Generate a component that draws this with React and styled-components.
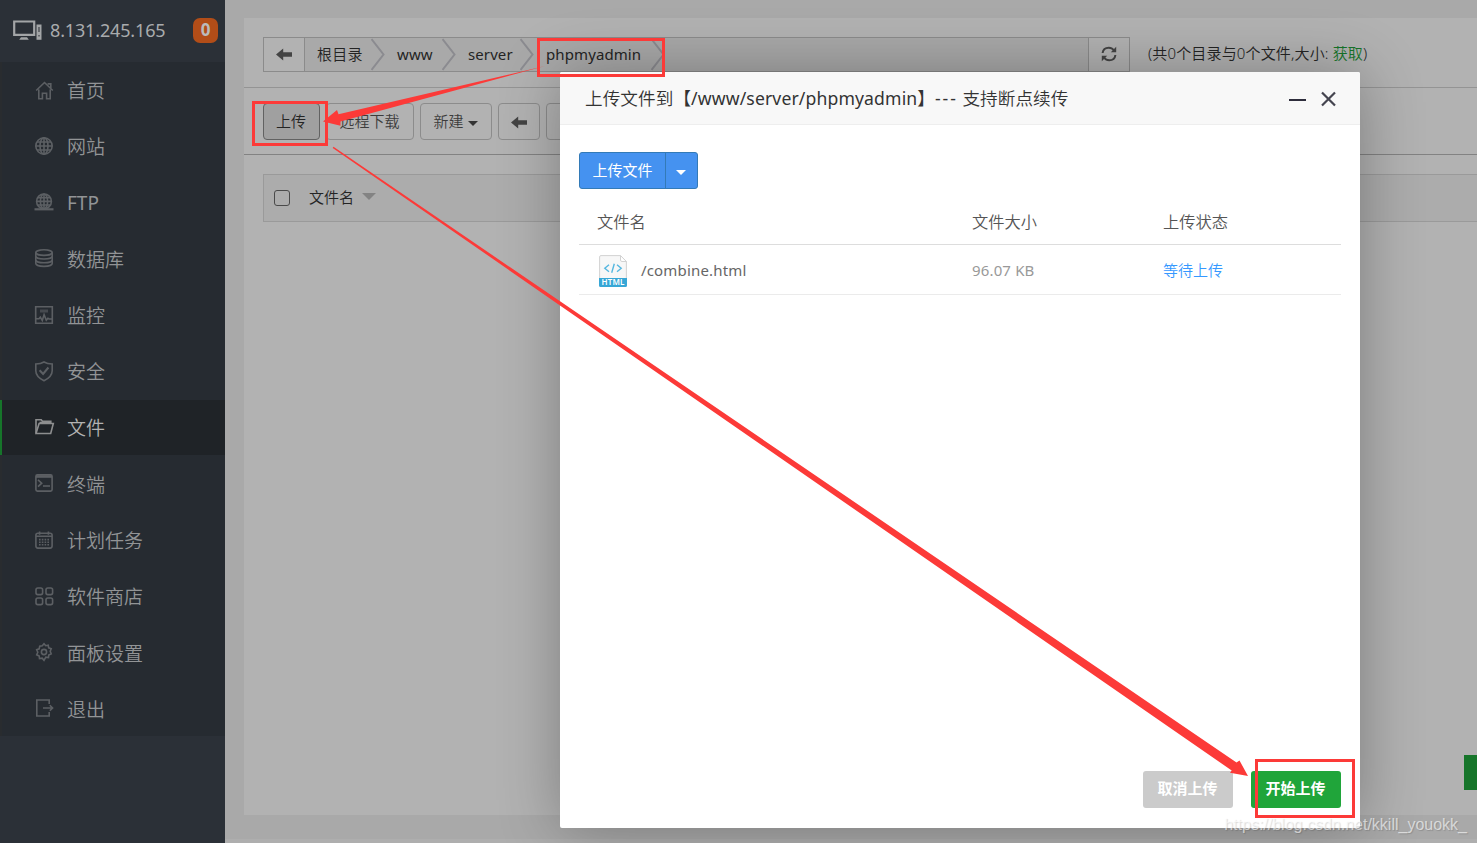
import React from "react";
import styled, { createGlobalStyle, css } from "styled-components";

const iconPaths = {
  home: (
    <>
      <path d="M1.2 9.5 9.5 1.5l8.3 8M3.8 8.5v9.2h3.6v-5.4h4.2v5.4h3.6V8.5" />
      <path d="M12.6 2.900h3.2v4" />
    </>
  ),
  site: (
    <>
      <circle cx="9" cy="9" r="8.2" />
      <ellipse cx="9" cy="9" rx="4" ry="8.2" />
      <path d="M9 .8v16.4M.8 9h16.4M2 5h14M2 13h14" />
    </>
  ),
  ftp: (
    <>
      <circle cx="9" cy="8.4" r="7.4" />
      <ellipse cx="9" cy="8.4" rx="3.6" ry="7.4" />
      <path d="M9 1v14M1.6 8.4h14.8M2.8 4.8h12.4M2.8 12h12.4" />
      <path d="M-.5 16.3h19" strokeWidth="2.2" />
    </>
  ),
  database: (
    <>
      <ellipse cx="9" cy="3.6" rx="8.2" ry="2.8" />
      <path d="M.8 3.6v11c0 1.6 3.6 2.8 8.2 2.8s8.2-1.2 8.2-2.8v-11" />
      <path d="M.8 7.2c0 1.6 3.6 2.8 8.2 2.8s8.2-1.2 8.2-2.8M.8 10.9c0 1.6 3.6 2.8 8.2 2.8s8.2-1.2 8.2-2.8" />
    </>
  ),
  monitor: (
    <>
      <path d="M.7.7h16.6v16.6H.7z" />
      <path d="M5 3.5h8v3H5z" fill="currentColor" stroke="none" opacity=".6" />
      <path d="M1 12.7h3l1.3-1.5 2 3.4 1.8-6 2.2 5.6 1.6-2 1.2.8h3" />
    </>
  ),
  shield: (
    <>
      <path d="M9 0c2.3 1.4 5 2 8.2 2v6.7c0 5.2-3.8 7.8-8.2 10C4.6 16.5.8 13.9.8 8.7V2C4 2 6.700 1.400 9 0z" />
      <path d="m4.600 8.300 3.500 3.700L13.400 5.500" strokeWidth="2" />
    </>
  ),
  folder: (
    <>
      <path d="M1 15V1.700h5.200l1.200 1.600h8.400V6" />
      <path d="M1 15.500 4.100 5.500h14.200l-2.600 10H1z" />
      <path d="M4.500 4.700h11" strokeWidth="2" />
    </>
  ),
  terminal: (
    <>
      <rect x=".9" y=".9" width="16.200" height="16.200" rx="1.500" />
      <path d="M1 2.500h16" strokeWidth="2.600" />
      <path d="m3 5.800 3.700 3.400L3 12.600M8 12h7" />
    </>
  ),
  calendar: (
    <>
      <rect x=".9" y="2.300" width="16.200" height="14.800" rx="2" />
      <path d="M1 5.300h16M4.600.5v3.300M13.400.5v3.300" />
      <path d="M4 8.600h10M4 11.200h10M4 13.800h10" strokeDasharray="1.600 1.200" />
    </>
  ),
  apps: (
    <>
      <rect x="1" y="1" width="6.600" height="6.600" rx="1.800" />
      <rect x="11" y="1" width="6.600" height="6.600" rx="1.800" />
      <rect x="1" y="11" width="6.600" height="6.600" rx="1.800" />
      <rect x="11" y="11" width="6.600" height="6.600" rx="1.800" />
    </>
  ),
  gear: (
    <>
      <path d="M7.300 2.700 9 .7l1.700 2 2.500-.6.5 2.700 2.500 1-1 2.400 1 2.600-2.400 1.200-.3 2.600-2.700-.4L9 17.300l-1.800-2.100-2.700.4-.3-2.600-2.500-1.200 1.100-2.600-1.100-2.400 2.500-1 .5-2.700z" />
      <circle cx="9" cy="9" r="2.600" />
    </>
  ),
  exit: (
    <>
      <path d="M14.200 5V1H1.800v16h12.400v-4" />
      <path d="M8 9h9.500M14.800 6.200 17.600 9l-2.800 2.800" />
    </>
  ),
};

const menu = [
  { icon: "home", label: "首页" },
  { icon: "site", label: "网站" },
  { icon: "ftp", label: "FTP", latin: true },
  { icon: "database", label: "数据库" },
  { icon: "monitor", label: "监控" },
  { icon: "shield", label: "安全" },
  { icon: "folder", label: "文件", active: true },
  { icon: "terminal", label: "终端" },
  { icon: "calendar", label: "计划任务" },
  { icon: "apps", label: "软件商店" },
  { icon: "gear", label: "面板设置" },
  { icon: "exit", label: "退出" },
];

const crumbs = [
  { label: "根目录", width: 80 },
  { label: "www", width: 71, latin: true },
  { label: "server", width: 78, latin: true },
  { label: "phpmyadmin", width: 131, latin: true },
];

const ArrowLeft = () => (
  <svg width="16" height="13" viewBox="0 0 16 13">
    <path d="M0 6.500 7.200.4v3.900H16v4.400H7.200v3.900z" fill="#444" />
  </svg>
);

function Sidebar() {
  return (
    <Side>
      <Server>
        <svg width="29" height="21" viewBox="0 0 29 21">
          <path d="M1.200 1.500h20v13.300h-20z" fill="none" stroke="#a3a5a7" strokeWidth="2.200" />
          <path d="M8 17.200h6l1.800 2.600H6.200z" fill="#a3a5a7" />
          <path d="M23.500 4.500h5v15.300h-5z" fill="#a3a5a7" />
          <path d="M25.200 7h1.600v5h-1.600zM25.200 15h1.600v1.600h-1.600z" fill="#55595e" />
        </svg>
        <Ip>8.131.245.165</Ip>
        <Count>0</Count>
      </Server>
      <Menu>
        {menu.map((item) => (
          <MenuItem key={item.label} $active={item.active} $latin={item.latin}>
            <svg width="19" height="20" viewBox="0 0 19 20">
              {iconPaths[item.icon]}
            </svg>
            {item.label}
          </MenuItem>
        ))}
      </Menu>
    </Side>
  );
}

function FilePanel() {
  return (
    <Main>
      <Panel>
        <PathRow>
          <BackButton>
            <ArrowLeft />
          </BackButton>
          <Crumbs>
            {crumbs.map((crumb) => (
              <Crumb key={crumb.label} $width={crumb.width} $latin={crumb.latin}>
                <span>{crumb.label}</span>
                <svg width="14" height="33" viewBox="0 0 14 33">
                  <path d="M.5 1 12.500 16.500.5 32" fill="none" stroke="#8b8b90" strokeWidth="2" />
                </svg>
              </Crumb>
            ))}
          </Crumbs>
          <RefreshButton>
            <svg width="16" height="16" viewBox="0 0 16 16" fill="none" stroke="#444" strokeWidth="2">
              <path d="M1.600 7C2 3.800 4.600 1.700 7.800 1.700c2.200 0 3.900 1 5 2.600M14.400 9c-.4 3.200-3 5.300-6.200 5.300-2.200 0-3.900-1-5-2.600" />
              <path d="M15.200.8v5.400H9.800zM.8 15.200V9.800h5.400z" fill="#444" stroke="none" />
            </svg>
          </RefreshButton>
          <Summary>
            (共0个目录与0个文件,大小: <a>获取</a>)
          </Summary>
        </PathRow>
        <ToolRow>
          <ToolButton $width={57} $pressed>
            上传
          </ToolButton>
          <ToolButton $width={88}>远程下载</ToolButton>
          <ToolButton $width={72}>
            新建
            <Caret />
          </ToolButton>
          <ToolButton $width={42}>
            <ArrowLeft />
          </ToolButton>
          <ToolButton $width={64} />
        </ToolRow>
        <ListHead>
          <Checkbox />
          <span>文件名</span>
          <SortMark />
        </ListHead>
      </Panel>
      <Footer />
      <SideTab />
    </Main>
  );
}

function UploadDialog() {
  return (
    <Dialog>
      <DialogHead>
        <DialogTitle>
          上传文件到【<Path>/www/server/phpmyadmin</Path>】<Dashes>---</Dashes> 支持断点续传
        </DialogTitle>
        <svg width="48" height="18" viewBox="0 0 48 18" fill="none" stroke="#2e2d3c">
          <path d="M0 10h17" strokeWidth="2" />
          <path d="m33 2.500 13 13m0-13-13 13" strokeWidth="2.200" stroke="#44444f" />
        </svg>
      </DialogHead>
      <DialogBody>
        <SplitButton>
          <SplitLabel>上传文件</SplitLabel>
          <SplitToggle>
            <Caret $light />
          </SplitToggle>
        </SplitButton>
        <HeadRow>
          <span>文件名</span>
          <span>文件大小</span>
          <span>上传状态</span>
        </HeadRow>
        <FileRow>
          <FileName>
            <svg width="28" height="32" viewBox="0 0 28 32">
              <path d="M2 .6h19.500l5.900 5.900V30a1.400 1.400 0 0 1-1.400 1.400H2A1.400 1.400 0 0 1 .6 30V2A1.400 1.400 0 0 1 2 .6z" fill="#f7f7f7" stroke="#d2d2d2" />
              <path d="M21.500.6v4.500c0 .8.600 1.400 1.400 1.400h4.500z" fill="#fff" stroke="#d2d2d2" />
              <path d="M0 23h28v7.500a1.500 1.500 0 0 1-1.500 1.500h-25A1.500 1.500 0 0 1 0 30.500z" fill="#37a7d6" />
              <path d="m10 9.800-4.200 3.500 4.200 3.500M18 9.800l4.200 3.500-4.200 3.500M15.300 8.800l-2.600 9" fill="none" stroke="#55b7e0" strokeWidth="1.400" />
              <text x="14" y="30.400" textAnchor="middle" fontSize="8" fontWeight="600" textLength="23" fill="#fff">
                HTML
              </text>
            </svg>
            <span>/combine.html</span>
          </FileName>
          <Size>96.07 KB</Size>
          <Status>等待上传</Status>
        </FileRow>
      </DialogBody>
      <DialogFoot>
        <FootButton>取消上传</FootButton>
        <FootButton $primary>开始上传</FootButton>
      </DialogFoot>
    </Dialog>
  );
}

function Marks() {
  return (
    <MarkLayer width="1477" height="843" viewBox="0 0 1477 843">
      <g fill="none" stroke="#fc3a38" strokeWidth="3">
        <path d="M538.500 39.500h125v36h-125z" />
        <path d="M253.500 102.500h73v42h-73z" />
        <path d="M1256.500 760.500h97v56h-97z" />
      </g>
      <g fill="#fc3a38">
        <path d="M545 66 340.500 121.500v4.300l-17.500-4.300 14-11.500 1.500 4.300z" />
        <path d="M333.500 146.800 1236.500 762.500l3-2L1248 776l-18-3.300 1.700-2.200L332.700 148z" />
      </g>
    </MarkLayer>
  );
}

export default function App() {
  return (
    <>
      <GlobalStyle />
      <Screen>
        <Sidebar />
        <FilePanel />
        <UploadDialog />
        <Marks />
        <Watermark>https://blog.csdn.net/kkill_youokk_</Watermark>
      </Screen>
    </>
  );
}

const GlobalStyle = createGlobalStyle`
  * {
    box-sizing: border-box;
  }

  body {
    margin: 0;
    overflow: hidden;
    font-family: "Noto Sans", "Noto Sans CJK SC", sans-serif;
    font-size: 15px;
    font-weight: 350;
    color: #242424;
  }
`;

const Screen = styled.div`
  position: relative;
  display: flex;
  width: 1477px;
  height: 843px;
  overflow: hidden;
  background: #a9a9a9;
`;

const Side = styled.aside`
  width: 225px;
  background: #2b3037;
`;

const Server = styled.div`
  display: flex;
  align-items: center;
  height: 62px;
  padding: 0 7px 2px 13px;
`;

const Ip = styled.span`
  flex: 1;
  margin-left: 8px;
  font-size: 18px;
  font-weight: 400;
  letter-spacing: -0.15px;
  color: #a9abad;
`;

const Count = styled.span`
  width: 25px;
  height: 25px;
  border-radius: 7px;
  background: #b24d18;
  color: #bbb;
  font-size: 17px;
  font-weight: 700;
  line-height: 24px;
  text-align: center;
`;

const Menu = styled.nav`
  display: grid;
  grid-template-rows: repeat(12, 56.25px);
  height: 674px;
  overflow: hidden;
  background: #262b31;
`;

const MenuItem = styled.a`
  display: flex;
  align-items: center;
  padding-left: 33px;
  border-left: 2px solid #292c2f;
  color: #929496;
  font-size: 19px;
  font-weight: ${({ $latin }) => ($latin ? 400 : 350)};

  svg {
    width: 19px;
    margin: 1px 13px 0 0;
    overflow: visible;
    fill: none;
    stroke: currentColor;
    stroke-width: 1.6;
    opacity: 0.5;
  }

  ${({ $active }) =>
    $active &&
    css`
      height: 55px;
      margin-top: 0.5px;
      padding-bottom: 1px;
      border-color: #16752a;
      background: #1f2327;
      color: #b2b2b2;

      svg {
        opacity: 0.75;
      }
    `}
`;

const Main = styled.main`
  position: relative;
  flex: 1;
  display: flex;
  flex-direction: column;
  justify-content: space-between;
  padding: 18px 0 0 19px;
`;

const Panel = styled.section`
  height: 797px;
  background: #b2b2b2;
`;

const PathRow = styled.div`
  display: flex;
  height: 70px;
  padding: 19px 0 0 19px;
  border-bottom: 1px solid #949494;
`;

const SquareButton = styled.button`
  display: flex;
  align-items: center;
  justify-content: center;
  width: 42px;
  height: 35px;
  padding: 0 0 1px;
  border: 1px solid #8b8b8b;
  background: #b2b2b2;
`;

const BackButton = styled(SquareButton)``;

const RefreshButton = styled(SquareButton)`
  margin-left: -1px;
  padding-bottom: 2px;
`;

const Crumbs = styled.div`
  display: flex;
  width: 785px;
  height: 35px;
  margin-left: -1px;
  border: 1px solid #8b8b8b;
  background: #a9a9a9;
`;

const Crumb = styled.span`
  display: flex;
  align-items: center;
  justify-content: space-between;
  width: ${({ $width }) => $width}px;
  padding-left: 12px;
  font-weight: ${({ $latin }) => ($latin ? 400 : 350)};
  letter-spacing: ${({ $latin }) => ($latin ? 0.1 : 0.2)}px;

  span {
    padding-bottom: 2px;
  }
`;

const Summary = styled.div`
  margin-left: 18px;
  line-height: 32px;
  letter-spacing: 0.15px;

  a {
    color: #16752a;
  }
`;

const ToolRow = styled.div`
  display: flex;
  gap: 6px;
  height: 67px;
  padding: 15px 0 0 19px;
  border-bottom: 1px solid #828282;
`;

const ToolButton = styled.button`
  display: flex;
  align-items: center;
  justify-content: center;
  width: ${({ $width }) => $width}px;
  height: 37px;
  padding: 0 1px 2px 0;
  border: 1px solid ${({ $pressed }) => ($pressed ? "#626262" : "#8c8c8c")};
  border-radius: 4px;
  background: ${({ $pressed }) => ($pressed ? "#a0a0a0" : "#b2b2b2")};
  color: ${({ $pressed }) => ($pressed ? "#242424" : "#3c3c3c")};
  font: inherit;

  svg {
    margin: 3px 0 0 1px;
  }
`;

const Caret = styled.i`
  margin: ${({ $light }) => ($light ? "0 2px 0 0" : "5px 0 0 4px")};
  border: 5px solid transparent;
  border-top-color: ${({ $light }) => ($light ? "#fff" : "#333")};
  border-bottom: 0;
`;

const ListHead = styled.div`
  display: flex;
  align-items: center;
  height: 48px;
  margin: 19px 0 0 19px;
  padding-left: 10px;
  border: 1px solid #9a9a9a;
  border-right: 0;
  background: #acacac;

  span {
    padding-bottom: 3px;
  }
`;

const Checkbox = styled.i`
  width: 16px;
  height: 16px;
  margin-right: 19px;
  border: 1px solid #4a4a4a;
  border-radius: 3px;
`;

const SortMark = styled.i`
  margin: 0 0 3px 8px;
  border: 7px solid transparent;
  border-top-color: #838383;
  border-bottom: 0;
`;

const Footer = styled.footer`
  height: 4px;
  margin-left: -19px;
  background: #aeaeae;
`;

const SideTab = styled.div`
  position: absolute;
  right: 0;
  top: 755px;
  width: 13px;
  height: 35px;
  background: #16752a;
`;

const Dialog = styled.div`
  position: absolute;
  left: 560px;
  top: 72px;
  display: flex;
  flex-direction: column;
  width: 800px;
  height: 756px;
  border-radius: 2px;
  background: #fff;
  box-shadow: 1px 1px 62px rgba(0, 0, 0, 0.3);
`;

const DialogHead = styled.header`
  display: flex;
  align-items: center;
  justify-content: space-between;
  height: 53px;
  padding: 2px 23px 0 25px;
  border-bottom: 1px solid #eee;
  border-radius: 2px 2px 0 0;
  background: #f8f8f8;
`;

const DialogTitle = styled.h3`
  margin: 0;
  padding-bottom: 4px;
  font-size: 17.6px;
  font-weight: 350;
  letter-spacing: 0.09px;
  color: #333;
  white-space: nowrap;
`;

const Path = styled.span`
  font-weight: 400;
  letter-spacing: 0.13px;
`;

const Dashes = styled.span`
  font-weight: 400;
  letter-spacing: 1.9px;
`;

const DialogBody = styled.div`
  flex: 1;
  padding: 27px 19px 0;
`;

const SplitButton = styled.div`
  display: flex;
  width: 119px;
  height: 37px;
  border: 1px solid #337ab7;
  border-radius: 3px;
  background: #4592f0;
  color: #fff;
  font-weight: 400;
`;

const SplitLabel = styled.span`
  width: 86px;
  border-right: 1px solid #337ab7;
  line-height: 34px;
  text-align: center;
`;

const SplitToggle = styled.span`
  flex: 1;
  display: flex;
  align-items: center;
  justify-content: center;
  padding-top: 3px;
`;

const Row = styled.div`
  display: grid;
  grid-template-columns: 375px 191px 1fr;
  align-items: center;
  padding-left: 18px;
`;

const HeadRow = styled(Row)`
  height: 56px;
  padding-top: 8px;
  border-bottom: 1px solid #ddd;
  color: #555;
  font-size: 16.25px;
`;

const FileRow = styled(Row)`
  height: 50px;
  border-bottom: 1px solid #ebebeb;
`;

const FileName = styled.span`
  display: flex;
  align-items: center;
  gap: 14px;
  padding: 3px 0 0 2px;
  color: #666;
  font-weight: 400;
  letter-spacing: 0.17px;

  span {
    padding-bottom: 3px;
  }
`;

const Size = styled.span`
  color: #999;
  font-weight: 400;
  letter-spacing: 0.15px;
`;

const Status = styled.span`
  color: #3598ff;
`;

const DialogFoot = styled.footer`
  display: flex;
  justify-content: flex-end;
  gap: 18px;
  padding: 0 19px 20px;
`;

const FootButton = styled.button`
  width: 90px;
  height: 37px;
  padding: 0 1px 4px 0;
  border: 0;
  border-radius: 3px;
  background: ${({ $primary }) => ($primary ? "#20a53a" : "#cbcbcb")};
  color: #fff;
  font: inherit;
  font-weight: 700;
`;

const MarkLayer = styled.svg`
  position: absolute;
  left: 0;
  top: 0;
`;

const Watermark = styled.div`
  position: absolute;
  right: 10px;
  bottom: 8px;
  font-family: "Liberation Sans", sans-serif;
  font-size: 16px;
  font-weight: 400;
  line-height: 21px;
  color: rgba(255, 255, 255, 0.6);
  text-shadow: 1px 1px 1px rgba(0, 0, 0, 0.15);
`;
